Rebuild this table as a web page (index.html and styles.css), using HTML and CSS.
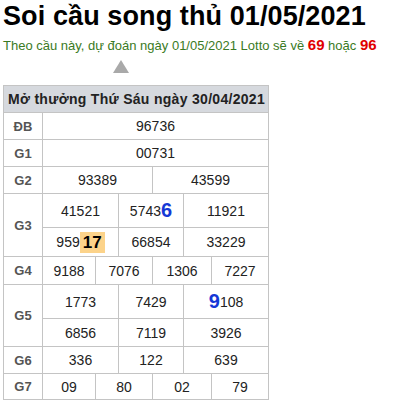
FILE: index.html
```html
<!DOCTYPE html>
<html lang="vi">
<head>
<meta charset="utf-8">
<link rel="stylesheet" href="styles.css">
</head>
<body>
<div class="page">
  <h1 class="title">Soi cầu song thủ 01/05/2021</h1>
  <p class="sub">Theo cầu này, dự đoán ngày 01/05/2021 Lotto sẽ về <b class="hot">69</b> hoặc <b class="hot">96</b></p>
  <div class="arrow"></div>
  <div class="kq">
    <div class="head">Mở thưởng Thứ Sáu ngày 30/04/2021</div>

    <div class="lbl">ĐB</div>
    <div class="c s6">96736</div>

    <div class="lbl">G1</div>
    <div class="c s6">00731</div>

    <div class="lbl">G2</div>
    <div class="c s3">93389</div>
    <div class="c s3">43599</div>

    <div class="lbl r2">G3</div>
    <div class="c s2">41521</div>
    <div class="c s2">5743<b class="blue">6</b></div>
    <div class="c s2">11921</div>
    <div class="c s2">959<b class="mark">17</b></div>
    <div class="c s2">66854</div>
    <div class="c s2">33229</div>

    <div class="lbl">G4</div>
    <div class="c">9188</div>
    <div class="c s2">7076</div>
    <div class="c s2">1306</div>
    <div class="c">7227</div>

    <div class="lbl r2">G5</div>
    <div class="c s2">1773</div>
    <div class="c s2">7429</div>
    <div class="c s2"><b class="blue">9</b>108</div>
    <div class="c s2">6856</div>
    <div class="c s2">7119</div>
    <div class="c s2">3926</div>

    <div class="lbl">G6</div>
    <div class="c s2">336</div>
    <div class="c s2">122</div>
    <div class="c s2">639</div>

    <div class="lbl">G7</div>
    <div class="c">09</div>
    <div class="c s2">80</div>
    <div class="c s2">02</div>
    <div class="c">79</div>
  </div>
</div>
</body>
</html>
```
FILE: styles.css
```css
html, body {
  margin: 0;
  padding: 0;
  background: #fff;
}
body {
  font-family: "Liberation Sans", Arial, sans-serif;
  color: #222;
}
.page {
  padding: 0 3px;
}
.title {
  margin: 1px 0 0;
  font-size: 27px;
  letter-spacing: 0.1px;
  line-height: 31px;
  font-weight: bold;
  color: #000;
}
.sub {
  margin: 4px 0 0;
  font-size: 13px;
  line-height: 18px;
  color: #3a7a24;
  white-space: nowrap;
}
.hot {
  color: #e00000;
  font-size: 15px;
}
.arrow {
  width: 0;
  height: 0;
  margin: 5px 0 0 110px;
  border-left: 8px solid transparent;
  border-right: 8px solid transparent;
  border-bottom: 13px solid #a9a9a9;
}
.kq {
  margin-top: 12px;
  width: 266px;
  box-sizing: border-box;
  display: grid;
  grid-template-columns: 38px 52px 22px 33px 30px 27px 56px;
  grid-template-rows: 26px 26px 26px 26px 33px 28px 27px 33px 27px 26px 25px;
  gap: 1px;
  padding: 1px;
  background: #c4c4c4;
}
.head {
  grid-column: 1 / -1;
  background: #d6d9de;
  font-weight: bold;
  font-size: 14px;
  letter-spacing: 0.3px;
  white-space: nowrap;
  color: #222;
  display: flex;
  align-items: center;
  padding-left: 4px;
}
.lbl {
  background: #fff;
  font-weight: bold;
  font-size: 13px;
  color: #555;
  display: flex;
  align-items: center;
  justify-content: center;
}
.r2 {
  grid-row: span 2;
}
.c {
  background: #fff;
  font-size: 14px;
  color: #222;
  display: flex;
  align-items: center;
  justify-content: center;
}
.s2 { grid-column: span 2; }
.s3 { grid-column: span 3; }
.s6 { grid-column: span 6; }
.blue {
  color: #1538d6;
  font-size: 20px;
}
.mark {
  background: #fcd38a;
  color: #000;
  font-size: 17px;
  padding: 2px 3px;
  line-height: 17px;
}
```
